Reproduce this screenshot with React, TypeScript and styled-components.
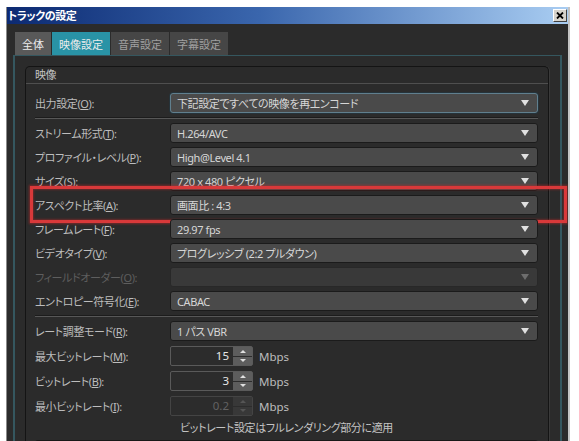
import React from 'react';
import styled, {createGlobalStyle} from 'styled-components';

const GlobalStyle = createGlobalStyle`
  html, body {
    margin: 0;
    padding: 0;
    background: #ffffff;
    overflow: hidden;
  }
  body {
    font-family: "Noto Sans", "Noto Sans CJK JP", sans-serif;
    font-feature-settings: "palt";
    font-size: 11px;
    letter-spacing: -0.4px;
  }
`;

const Page = styled.div`
  padding: 7px 0 0 6px;
  width: 579px;
  height: 441px;
  box-sizing: border-box;
`;

const Window = styled.div`
  display: flex;
  flex-direction: column;
  width: 564px;
  height: 434px;
  box-sizing: border-box;
  border-left: 1px solid #8a8a8a;
  border-right: 2px solid #c4c4c4;
  background: #2b2b2b;
  overflow: hidden;
`;

const TitleBar = styled.div`
  display: flex;
  align-items: center;
  justify-content: space-between;
  height: 17px;
  padding: 0 1px 0 1px;
  background: linear-gradient(to right, #0c2a72 0%, #3a66ad 45%, #a9cdf2 100%);
`;

const Title = styled.div`
  color: #ffffff;
  font-weight: bold;
  font-size: 11px;
  line-height: 17px;
`;

const CloseButton = styled.div`
  display: flex;
  align-items: center;
  justify-content: center;
  width: 14px;
  height: 13px;
  box-sizing: border-box;
  background: #d6d3cc;
  border: 1px solid;
  border-color: #ffffff #404040 #404040 #ffffff;
`;

const Body = styled.div`
  flex: 1;
  display: flex;
  flex-direction: column;
  padding: 8px 6px 0 6px;
`;

const Tabs = styled.div`
  display: flex;
  gap: 1px;
  padding-left: 2px;
  height: 23px;
`;

const Tab = styled.div<{$active?: boolean; $first?: boolean}>`
  display: flex;
  align-items: center;
  justify-content: center;
  width: ${p => (p.$first ? '36px' : '58px')};
  background: ${p => (p.$active ? '#2993a6' : p.$first ? '#595959' : '#464646')};
  color: ${p => (p.$active || p.$first ? '#ececec' : '#a0a0a0')};
  font-size: 11px;
  letter-spacing: 0;
`;

const Panel = styled.div`
  flex: 1;
  border: 2px solid #35575f;
  border-top-width: 1px;
  border-bottom: none;
  padding: 10px 11px 0 10px;
`;

const Group = styled.div`
  border: 1px solid #141414;
  border-bottom: none;
  border-radius: 5px 5px 0 0;
  box-shadow: 1px 0 0 #3a3a3a;
  height: 100%;
`;

const GroupHeader = styled.div`
  height: 16px;
  line-height: 16px;
  padding-left: 9px;
  color: #c4c4c4;
  font-size: 11px;
  border-bottom: 1px solid #4f4f4f;
`;

const GroupContent = styled.div`
  display: flex;
  flex-direction: column;
  padding: 9px 10px 0 9px;
`;

const Rows = styled.div<{$gap: number}>`
  display: flex;
  flex-direction: column;
  gap: ${p => p.$gap}px;
`;

const Row = styled.div`
  position: relative;
  display: grid;
  grid-template-columns: 135px 1fr;
  align-items: center;
  height: 20px;
`;

const Label = styled.div<{$disabled?: boolean}>`
  color: ${p => (p.$disabled ? '#5e5e5e' : '#bdbdbd')};
  font-size: 11px;
  white-space: nowrap;
`;

const Select = styled.div<{$focused?: boolean; $disabled?: boolean}>`
  display: flex;
  align-items: center;
  justify-content: space-between;
  height: 20px;
  box-sizing: border-box;
  padding: 0 8px 0 6px;
  border-radius: 3px;
  border: 1px solid ${p => (p.$focused ? '#607f8e' : p.$disabled ? '#282828' : '#1b1b1b')};
  background: ${p => (p.$disabled ? '#393939' : '#4a4a4a')};
  box-shadow: ${p => (p.$focused ? '0 0 0 1px #26333a' : 'none')};
  color: #d6d6d6;
  font-size: 11px;
  white-space: nowrap;
`;

const Arrow = styled.span<{$disabled?: boolean}>`
  width: 0;
  height: 0;
  border-left: 4px solid transparent;
  border-right: 4px solid transparent;
  border-top: 6px solid ${p => (p.$disabled ? '#6e6e6e' : '#e0e0e0')};
`;

const Separator = styled.div<{$top: number; $bottom: number}>`
  margin: ${p => p.$top}px 0 ${p => p.$bottom}px 0;
  height: 0;
  border-top: 1px solid #1c1c1c;
  border-bottom: 1px solid #575757;
`;

const Highlight = styled.div`
  position: absolute;
  left: -5px;
  right: -29px;
  top: -9px;
  bottom: -8px;
  border: 3px solid #d8393a;
  box-shadow: 0 0 2px 1px rgba(200, 40, 40, 0.5), inset 0 0 2px 1px rgba(200, 40, 40, 0.4);
  pointer-events: none;
`;

const SpinWrap = styled.div`
  display: flex;
  align-items: center;
  gap: 6px;
`;

const Spin = styled.div<{$disabled?: boolean}>`
  display: flex;
  width: 83px;
  height: 20px;
  box-sizing: border-box;
  border: 1px solid ${p => (p.$disabled ? '#444444' : '#5a5a5a')};
  border-radius: 2px;
  background: #2c2c2c;
`;

const SpinValue = styled.div<{$disabled?: boolean}>`
  flex: 1;
  text-align: right;
  padding-right: 4px;
  line-height: 18px;
  color: ${p => (p.$disabled ? '#626262' : '#e6e6e6')};
  font-size: 11.5px;
  letter-spacing: 0;
`;

const SpinButtons = styled.div`
  display: flex;
  flex-direction: column;
  gap: 1px;
  width: 19px;
  background: #2c2c2c;
`;

const SpinButton = styled.div<{$disabled?: boolean}>`
  flex: 1;
  display: flex;
  align-items: center;
  justify-content: center;
  background: ${p => (p.$disabled ? '#383838' : '#5d5d5d')};
`;

const SpinTri = styled.span<{$down?: boolean; $disabled?: boolean}>`
  width: 0;
  height: 0;
  border-left: 3px solid transparent;
  border-right: 3px solid transparent;
  ${p =>
    p.$down
      ? `border-top: 3px solid ${p.$disabled ? '#555' : '#e0e0e0'};`
      : `border-bottom: 3px solid ${p.$disabled ? '#555' : '#e0e0e0'};`}
`;

const Unit = styled.span`
  color: #bdbdbd;
  font-size: 11.5px;
  letter-spacing: 0;
`;

const Note = styled.div`
  margin-top: 3px;
  text-align: center;
  color: #c4c4c4;
  font-size: 11px;
  line-height: 17px;
`;

const NextEdge = styled.div`
  margin-top: 4px;
  height: 4px;
  border-top: 2px solid #181818;
  border-radius: 3px 3px 0 0;
  background: #323232;
`;

type SelRow = {
  label: string;
  key: string;
  value: string;
  focused?: boolean;
  disabled?: boolean;
  highlight?: boolean;
};

const videoRows: SelRow[] = [
  {label: 'ストリーム形式', key: 'T', value: 'H.264/AVC'},
  {label: 'プロファイル・レベル', key: 'P', value: 'High@Level 4.1'},
  {label: 'サイズ', key: 'S', value: '720 x 480 ピクセル'},
  {label: 'アスペクト比率', key: 'A', value: '画面比 : 4:3', highlight: true},
  {label: 'フレームレート', key: 'F', value: '29.97 fps'},
  {label: 'ビデオタイプ', key: 'V', value: 'プログレッシブ (2:2 プルダウン)'},
  {label: 'フィールドオーダー', key: 'O', value: '', disabled: true},
  {label: 'エントロピー符号化', key: 'E', value: 'CABAC'},
];

const spinRows = [
  {label: '最大ビットレート', key: 'M', value: '15'},
  {label: 'ビットレート', key: 'B', value: '3'},
  {label: '最小ビットレート', key: 'I', value: '0.2', disabled: true},
];

function SelectRow({row}: {row: SelRow}) {
  return (
    <Row>
      <Label $disabled={row.disabled}>
        {row.label}(<u>{row.key}</u>):
      </Label>
      <Select $focused={row.focused} $disabled={row.disabled}>
        <span>{row.value}</span>
        <Arrow $disabled={row.disabled} />
      </Select>
      {row.highlight && <Highlight />}
    </Row>
  );
}

export default function App(): JSX.Element {
  return (
    <Page>
      <GlobalStyle />
      <Window>
        <TitleBar>
          <Title>トラックの設定</Title>
          <CloseButton>
            <svg width="8" height="7" viewBox="0 0 8 7">
              <path d="M1 0.5 L7 6.5 M7 0.5 L1 6.5" stroke="#000" strokeWidth="1.8" />
            </svg>
          </CloseButton>
        </TitleBar>
        <Body>
          <Tabs>
            <Tab $first>全体</Tab>
            <Tab $active>映像設定</Tab>
            <Tab>音声設定</Tab>
            <Tab>字幕設定</Tab>
          </Tabs>
          <Panel>
            <Group>
              <GroupHeader>映像</GroupHeader>
              <GroupContent>
                <SelectRow
                  row={{
                    label: '出力設定',
                    key: 'O',
                    value: '下記設定ですべての映像を再エンコード',
                    focused: true,
                  }}
                />
                <Separator $top={4} $bottom={4} />
                <Rows $gap={4}>
                  {videoRows.map(r => (
                    <SelectRow key={r.label} row={r} />
                  ))}
                </Rows>
                <Separator $top={4} $bottom={4} />
                <Rows $gap={5}>
                  <SelectRow row={{label: 'レート調整モード', key: 'R', value: '1 パス VBR'}} />
                  {spinRows.map(s => (
                    <Row key={s.label}>
                      <Label>
                        {s.label}(<u>{s.key}</u>):
                      </Label>
                      <SpinWrap>
                        <Spin $disabled={s.disabled}>
                          <SpinValue $disabled={s.disabled}>{s.value}</SpinValue>
                          <SpinButtons>
                            <SpinButton $disabled={s.disabled}>
                              <SpinTri $disabled={s.disabled} />
                            </SpinButton>
                            <SpinButton $disabled={s.disabled}>
                              <SpinTri $down $disabled={s.disabled} />
                            </SpinButton>
                          </SpinButtons>
                        </Spin>
                        <Unit>Mbps</Unit>
                      </SpinWrap>
                    </Row>
                  ))}
                </Rows>
                <Note>ビットレート設定はフルレンダリング部分に適用</Note>
                <NextEdge />
              </GroupContent>
            </Group>
          </Panel>
        </Body>
      </Window>
    </Page>
  );
}
